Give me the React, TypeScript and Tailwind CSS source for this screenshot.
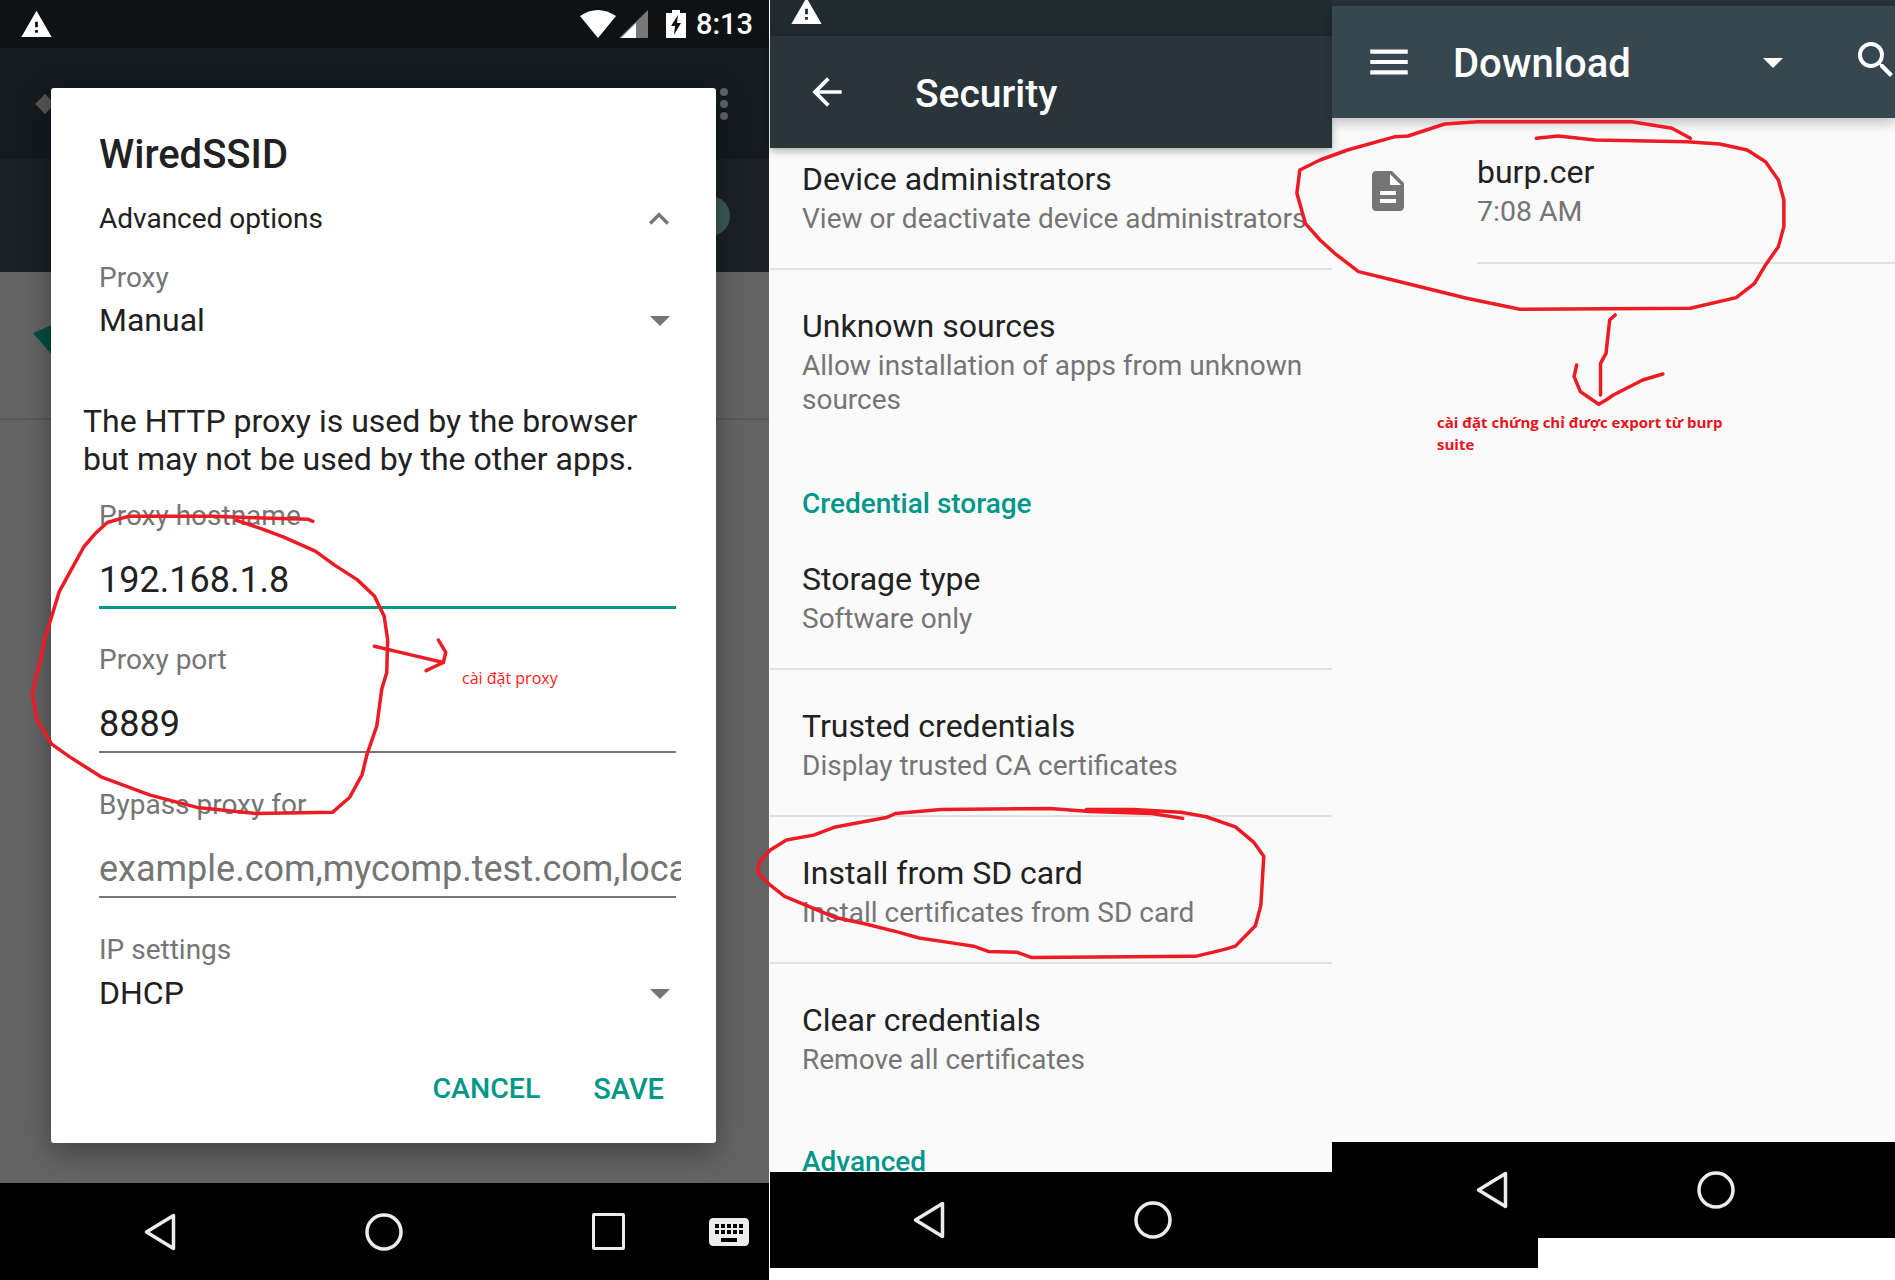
import React from "react";
import { MdArrowBack, MdArrowDropDown, MdDescription, MdKeyboard, MdKeyboardArrowUp, MdMenu, MdSearch, MdWarning } from "react-icons/md";

const RED = "#ed1c24";

const toPoints = (pts: number[][]) => pts.map((p) => p.join(",")).join(" ");

const NavBack = () => (
  <svg width="32" height="38" viewBox="0 0 32 38" fill="none" stroke="#ececec" strokeWidth="3.5" strokeLinejoin="round">
    <path d="M2.5 19 L29.5 2.5 V35.5 Z" />
  </svg>
);

const NavHome = () => (
  <svg width="38" height="38" viewBox="0 0 38 38" fill="none" stroke="#ececec" strokeWidth="3.5">
    <circle cx="19" cy="19" r="17" />
  </svg>
);

const Row = ({ title, sub }: { title: string; sub: string }) => (
  <div className="border-b-2 border-[#e1e1e1] pt-[36px] pb-[29px] pl-[32px]">
    <div className="text-[32px] leading-[40px] text-[#212121]">{title}</div>
    <div className="text-[28px] leading-[40px] text-[#757575]">{sub}</div>
  </div>
);

function WifiScreen() {
  return (
    <div className="relative mr-px h-[1280px] w-[769px] shrink-0 overflow-hidden bg-[#646464] font-['Roboto',sans-serif]">
      <div className="flex h-[48px] items-center bg-[#0e1214] pr-[16px] text-white">
        <MdWarning size={33} className="ml-[20px]" />
        <svg width="36" height="28" viewBox="0 0 36 28" className="ml-auto" fill="#fff">
          <path d="M0 6 Q18 -6 36 6 L18 28 Z" />
        </svg>
        <svg width="30" height="28" viewBox="0 0 30 28" className="ml-[3px]">
          <path d="M29 0 V28 H0 Z" fill="#777" />
          <path d="M17 13 V28 H2 Z" fill="#fff" />
        </svg>
        <svg width="20" height="28" viewBox="0 0 20 28" className="ml-[17px]">
          <path d="M6 0 H14 V3 H20 V28 H0 V3 H6 Z" fill="#fff" />
          <path d="M12 5 L5 16 H9 L8 25 L15 13 H11 Z" fill="#0e1214" />
        </svg>
        <span className="ml-[10px] text-[29px] font-medium leading-none">8:13</span>
      </div>
      <div className="h-[111px] bg-[#141a1e]" />
      <div className="h-[113px] bg-[#1a2227]" />
      <div className="mt-[146px] h-[2px] bg-[#5a5a5a]" />

      <div className="absolute left-[38px] top-[97px] h-[14px] w-[14px] rotate-45 bg-[#555]" />
      <div className="absolute left-[720px] top-[88px] flex flex-col gap-[4px]">
        <div className="h-[8px] w-[8px] rounded-full bg-[#5f6468]" />
        <div className="h-[8px] w-[8px] rounded-full bg-[#5f6468]" />
        <div className="h-[8px] w-[8px] rounded-full bg-[#5f6468]" />
      </div>
      <div className="absolute left-[690px] top-[196px] h-[40px] w-[40px] rounded-full bg-[#3a5a55]" />
      <svg width="20" height="32" viewBox="0 0 20 32" className="absolute left-[33px] top-[325px]">
        <path d="M0 8 L19 0 V30 Z" fill="#004d40" />
      </svg>

      {/* dialog */}
      <div className="absolute left-[51px] top-[88px] h-[1055px] w-[665px] rounded-[3px] bg-white pl-[48px] pr-[40px] pt-[42px] shadow-[0_10px_30px_rgba(0,0,0,0.35)]">
        <div className="text-[40px] font-medium leading-[50px] text-[#212121]">WiredSSID</div>
        <div className="mt-[19px] flex items-center justify-between text-[28px] leading-[40px] text-[#212121]">
          Advanced options
          <MdKeyboardArrowUp size={40} className="mr-[-3px] text-[#757575]" />
        </div>
        <div className="mt-[19px] text-[28px] leading-[40px] text-[#757575]">Proxy</div>
        <div className="mt-[2px] flex h-[40px] items-center justify-between text-[32px] leading-[40px] text-[#212121]">
          Manual
          <MdArrowDropDown size={48} className="mr-[-8px] text-[#757575]" />
        </div>
        <div className="ml-[-16px] mt-[62px] text-[32px] leading-[38px] text-[#212121]">
          The HTTP proxy is used by the browser
          <br />
          but may not be used by the other apps.
        </div>
        <div className="mt-[18px] text-[28px] leading-[40px] text-[#757575]">Proxy hostname</div>
        <div className="mt-[24px] border-b-[3px] border-[#009688] pb-[6px] text-[36px] leading-[40px] text-[#212121]">192.168.1.8</div>
        <div className="mt-[31px] text-[28px] leading-[40px] text-[#757575]">Proxy port</div>
        <div className="mt-[24px] border-b-2 border-[#757575] pb-[7px] text-[36px] leading-[40px] text-[#212121]">8889</div>
        <div className="mt-[32px] text-[28px] leading-[40px] text-[#757575]">Bypass proxy for</div>
        <div className="mt-[24px] border-b-2 border-[#757575] pb-[7px] text-[36px] leading-[40px] text-[#757575]">
          <div className="mr-[-5px] overflow-hidden whitespace-nowrap">example.com,mycomp.test.com,localhost</div>
        </div>
        <div className="mt-[32px] text-[28px] leading-[40px] text-[#757575]">IP settings</div>
        <div className="mt-[3px] flex h-[40px] items-center justify-between text-[32px] leading-[40px] text-[#212121]">
          DHCP
          <MdArrowDropDown size={48} className="mr-[-8px] text-[#757575]" />
        </div>
        <div className="mt-[56px] flex justify-end gap-[53px] pr-[12px] text-[29px] font-medium leading-[40px] text-[#009688]">
          <span className="text-[28.5px]">CANCEL</span>
          <span>SAVE</span>
        </div>
      </div>

      <div className="absolute inset-x-0 bottom-0 flex h-[97px] items-center bg-black pl-[144px]">
        <NavBack />
        <div className="ml-[189px]">
          <NavHome />
        </div>
        <div className="ml-[189px] h-[37px] w-[33px] rounded-[2px] border-[3.5px] border-[#ececec]" />
        <MdKeyboard size={48} className="ml-[80px] text-[#ececec]" />
      </div>
    </div>
  );
}

function SecurityScreen() {
  return (
    <div className="flex h-[1268px] w-[562px] shrink-0 flex-col bg-black font-['Roboto',sans-serif]">
      <div className="h-[36px] shrink-0 overflow-hidden bg-[#212a2f] text-white">
        <MdWarning size={33} className="ml-[20px] mt-[-5px]" />
      </div>
      <div className="z-10 flex h-[112px] shrink-0 items-center bg-[#29343b] pl-[35px] text-white shadow-[0_3px_8px_rgba(0,0,0,0.3)]">
        <MdArrowBack size={44} className="shrink-0" />
        <span className="ml-[66px] mt-[4px] text-[39px] font-medium leading-none">Security</span>
      </div>
      <div className="h-[1024px] shrink-0 overflow-hidden bg-[#fafafa]">
        <div className="border-b-2 border-[#e1e1e1] pt-[11px] pb-[29px] pl-[32px]">
          <div className="text-[32px] leading-[40px] text-[#212121]">Device administrators</div>
          <div className="whitespace-nowrap text-[28px] leading-[40px] text-[#757575]">View or deactivate device administrators</div>
        </div>
        <div className="pt-[36px] pl-[32px]">
          <div className="text-[32px] leading-[40px] text-[#212121]">Unknown sources</div>
          <div className="mt-[3px] text-[28px] leading-[34px] text-[#757575]">
            Allow installation of apps from unknown
            <br />
            sources
          </div>
        </div>
        <div className="mt-[67px] pl-[32px] text-[28px] font-medium leading-[40px] text-[#009688]">Credential storage</div>
        <div className="border-b-2 border-[#e1e1e1] pt-[35px] pb-[29px] pl-[32px]">
          <div className="text-[32px] leading-[40px] text-[#212121]">Storage type</div>
          <div className="text-[28px] leading-[40px] text-[#757575]">Software only</div>
        </div>
        <Row title="Trusted credentials" sub="Display trusted CA certificates" />
        <Row title="Install from SD card" sub="Install certificates from SD card" />
        <div className="pt-[36px] pl-[32px]">
          <div className="text-[32px] leading-[40px] text-[#212121]">Clear credentials</div>
          <div className="text-[28px] leading-[40px] text-[#757575]">Remove all certificates</div>
        </div>
        <div className="mt-[62px] pl-[32px] text-[28px] font-medium leading-[40px] text-[#009688]">Advanced</div>
      </div>
      <div className="flex h-[96px] items-center pl-[143px]">
        <NavBack />
        <div className="ml-[189px]">
          <NavHome />
        </div>
      </div>
    </div>
  );
}

function DownloadScreen() {
  return (
    <div className="flex h-[1268px] w-[563px] shrink-0 flex-col font-['Roboto',sans-serif]">
      <div className="h-[6px] shrink-0 bg-[#263238]" />
      <div className="z-10 flex h-[112px] shrink-0 items-center overflow-hidden bg-[#37474f] pl-[32px] text-white shadow-[0_6px_10px_rgba(0,0,0,0.2)]">
        <MdMenu size={50} className="shrink-0" />
        <span className="ml-[39px] mt-[4px] shrink-0 text-[40px] font-medium leading-none">Download</span>
        <MdArrowDropDown size={48} className="ml-[118px] shrink-0" />
        <MdSearch size={48} className="ml-[55px] mt-[-4px] shrink-0" />
      </div>
      <div className="h-[1024px] shrink-0 bg-[#fafafa]">
        <div className="flex pt-[34px]">
          <MdDescription size={48} className="ml-[32px] mt-[15px] shrink-0 text-[#757575]" />
          <div className="ml-[65px] flex-1 border-b-2 border-[#e1e1e1] pb-[30px]">
            <div className="text-[32px] leading-[40px] text-[#212121]">burp.cer</div>
            <div className="text-[28.5px] leading-[40px] text-[#757575]">7:08 AM</div>
          </div>
        </div>
      </div>
      <div className="flex h-[96px] shrink-0 items-center bg-black pl-[144px]">
        <NavBack />
        <div className="ml-[189px]">
          <NavHome />
        </div>
      </div>
      <div className="h-[30px] w-[206px] shrink-0 bg-black" />
    </div>
  );
}

// hand drawn marks over the screens, coordinates are read off the crops
const circleProxy = [[635,1277],[625,1272],[430,1265],[260,1265],[218,1280],[195,1305],[170,1340],[145,1395],[120,1450],[100,1530],[90,1568],[80,1628],[65,1698],[75,1763],[105,1823],[140,1853],[205,1903],[305,1948],[400,1978],[520,1993],[675,1990],[710,1953],[735,1898],[745,1848],[765,1778],[775,1688],[785,1648],[787,1568],[780,1510],[760,1460],[725,1420],[680,1385],[640,1350],[575,1315],[530,1295],[480,1275]];
const arrowProxy = [[760,1583],[830,1603],[900,1623],[905,1598],[890,1568]];
const circleInstall = [[1135,437],[1050,425],[880,420],[770,413],[470,415],[345,425],[320,435],[180,458],[120,478],[45,490],[0,515],[-30,545],[-33,570],[0,600],[40,628],[100,650],[180,680],[260,695],[350,715],[410,730],[500,742],[560,750],[600,763],[680,765],[720,778],[1170,775],[1250,758],[1280,750],[1335,700],[1350,650],[1358,530],[1330,495],[1280,458],[1200,433],[1130,422],[1000,415],[870,415]];
const circleBurp = [[590,415],[650,408],[750,420],[1000,425],[1090,432],[1165,450],[1215,485],[1250,540],[1265,600],[1265,680],[1250,740],[1215,795],[1185,850],[1135,893],[1010,925],[545,928],[400,895],[190,838],[105,815],[40,760],[0,720],[-40,670],[-63,580],[-55,510],[0,480],[75,450],[205,410],[240,408],[340,372],[430,365],[850,365],[960,385],[1010,415]];
const arrowBurp = [[805,945],[790,960],[780,1060],[765,1090],[765,1185]];
const arrowBurpHead = [[700,1095],[693,1130],[710,1175],[760,1213],[780,1200],[800,1185],[880,1140],[935,1122]];

function Scribbles() {
  const line = { fill: "none", stroke: RED, strokeWidth: 3.5, strokeLinejoin: "round", strokeLinecap: "round", vectorEffect: "non-scaling-stroke" } as const;
  return (
    <svg width="1895" height="1280" viewBox="0 0 1895 1280" className="pointer-events-none absolute inset-0 z-20">
      <g transform="scale(0.4926 0.4082)">
        <polyline points={toPoints(circleProxy)} {...line} />
        <polyline points={toPoints(arrowProxy)} {...line} />
        <polyline points="900,1623 865,1643" {...line} />
      </g>
      <g transform="translate(770 640) scale(0.3636 0.4082)">
        <polyline points={toPoints(circleInstall)} {...line} />
      </g>
      <g transform="translate(1320 0) scale(0.3667 0.3333)">
        <polyline points={toPoints(circleBurp)} {...line} />
        <polyline points={toPoints(arrowBurp)} {...line} />
        <polyline points={toPoints(arrowBurpHead)} {...line} />
      </g>
    </svg>
  );
}

export default function App() {
  return (
    <div className="relative flex h-[1280px] w-[1895px] items-start overflow-hidden bg-white">
      <WifiScreen />
      <SecurityScreen />
      <DownloadScreen />
      <Scribbles />
      <div className="absolute left-[462px] top-[667px] z-20 font-['Open_Sans',sans-serif] text-[16px] leading-[22px] text-[#ff1a1a]">cài đặt proxy</div>
      <div className="absolute left-[1437px] top-[411px] z-20 w-[320px] font-['Open_Sans',sans-serif] text-[15px] font-bold leading-[22px] text-[#e8141c]">
        cài đặt chứng chỉ được export từ burp
        <br />
        suite
      </div>
    </div>
  );
}
